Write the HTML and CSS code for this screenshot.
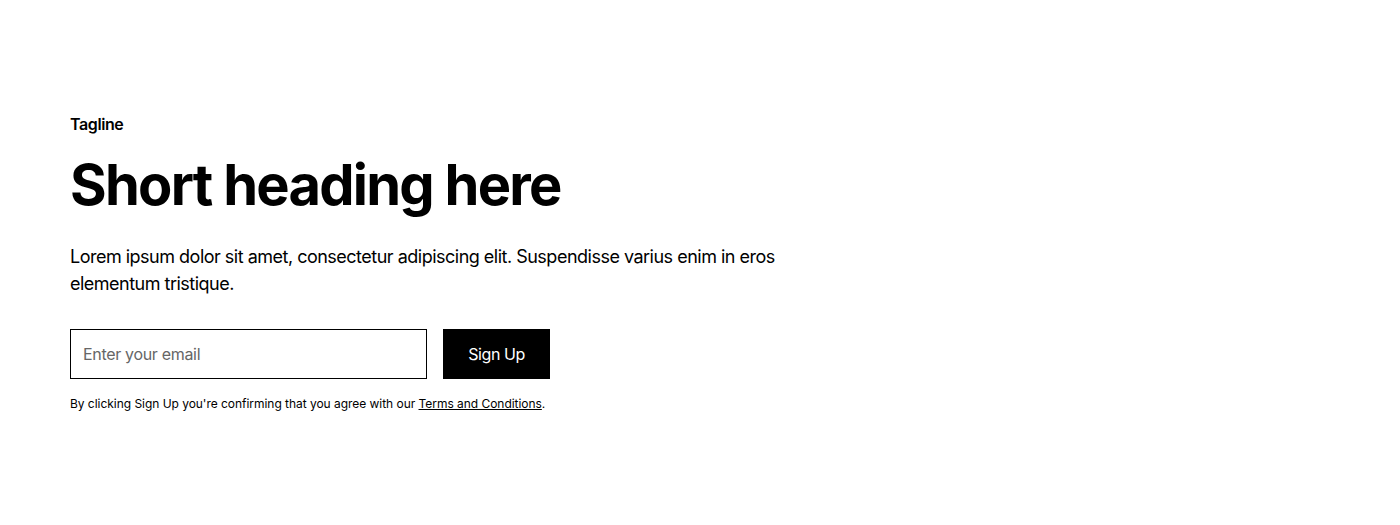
FILE: index.html
```html
<!DOCTYPE html>
<html lang="en">
<head>
    <meta charset="UTF-8">
    <meta name="viewport" content="width=device-width, initial-scale=1.0">
    <title>Header</title>
    <link rel="stylesheet" href="styles.css">
</head>
<body>

    <section class="header">
        <div class="content">
            <p class="tagline">Tagline</p>
            <h1>Short heading here</h1>
            <p class="intro">Lorem ipsum dolor sit amet, consectetur adipiscing elit. Suspendisse varius enim in eros elementum tristique.</p>

            <!-- Signup form -->
            <form class="signup" onsubmit="return false;">
                <input type="email" placeholder="Enter your email">
                <button type="submit">Sign Up</button>
            </form>
            <p class="note">By clicking Sign Up you're confirming that you agree with our <a href="#">Terms and Conditions</a>.</p>
        </div>
    </section>

</body>
</html>
```

FILE: styles.css
```css
/* Basic page styling */
body {
    margin: 0;
    font-family: Inter, "Noto Sans", sans-serif;
    color: #000;
    background-color: #fff;
}

/* Header section */
.header {
    padding: 112px 5%;
}

.content {
    max-width: 768px;
}

.tagline {
    margin: 0 0 16px;
    font-size: 16px;
    font-weight: 600;
    line-height: 1.5;
    letter-spacing: -0.025em;
}

h1 {
    margin: 0 0 24px;
    font-size: 56px;
    font-weight: 700;
    line-height: 1.2;
    letter-spacing: -0.031em;
}

.intro {
    margin: 0;
    font-size: 18px;
    line-height: 1.5;
    letter-spacing: -0.028em;
}

/* Email form */
.signup {
    display: grid;
    grid-template-columns: 1fr max-content;
    gap: 16px;
    max-width: 480px;
    margin: 32px 0 16px;
}

.signup input {
    height: 50px;
    padding: 8px 12px;
    border: 1px solid #000;
    border-radius: 0;
    font-family: inherit;
    font-size: 16px;
    letter-spacing: -0.02em;
    color: #000;
    box-sizing: border-box;
    outline: none;
}

.signup input::placeholder {
    color: #666;
}

.signup button {
    padding: 12px 24px;
    border: 1px solid #000;
    background-color: #000;
    color: #fff;
    font-family: inherit;
    font-size: 16px;
    line-height: 24px;
    letter-spacing: -0.025em;
    cursor: pointer;
}

.note {
    margin: 0;
    font-size: 12px;
    line-height: 1.5;
    letter-spacing: -0.003em;
}

.note a {
    color: inherit;
    text-decoration: underline;
}
```
